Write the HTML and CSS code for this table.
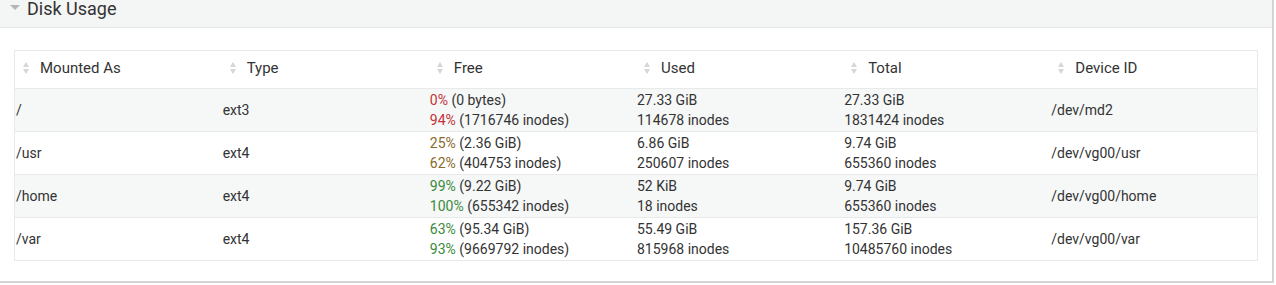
FILE: index.html
```html
<!DOCTYPE html>
<html lang="en">
<head>
    <meta charset="UTF-8">
    <title>Disk Usage</title>
    <link rel="stylesheet" href="styles.css">
</head>
<body>
    <div class="panel">
        <div class="panel-heading">
            <span class="caret"></span>Disk Usage
        </div>
        <div class="panel-body">
            <table class="disk-table">
                <thead>
                    <tr>
                        <th><span class="sort"></span>Mounted As</th>
                        <th><span class="sort"></span>Type</th>
                        <th><span class="sort"></span>Free</th>
                        <th><span class="sort"></span>Used</th>
                        <th><span class="sort"></span>Total</th>
                        <th><span class="sort"></span>Device ID</th>
                    </tr>
                </thead>
                <tbody>
                    <tr>
                        <td>/</td>
                        <td>ext3</td>
                        <td><span class="danger">0%</span> (0 bytes)<br><span class="danger">94%</span> (1716746 inodes)</td>
                        <td>27.33 GiB<br>114678 inodes</td>
                        <td>27.33 GiB<br>1831424 inodes</td>
                        <td>/dev/md2</td>
                    </tr>
                    <tr>
                        <td>/usr</td>
                        <td>ext4</td>
                        <td><span class="warning">25%</span> (2.36 GiB)<br><span class="warning">62%</span> (404753 inodes)</td>
                        <td>6.86 GiB<br>250607 inodes</td>
                        <td>9.74 GiB<br>655360 inodes</td>
                        <td>/dev/vg00/usr</td>
                    </tr>
                    <tr>
                        <td>/home</td>
                        <td>ext4</td>
                        <td><span class="success">99%</span> (9.22 GiB)<br><span class="success">100%</span> (655342 inodes)</td>
                        <td>52 KiB<br>18 inodes</td>
                        <td>9.74 GiB<br>655360 inodes</td>
                        <td>/dev/vg00/home</td>
                    </tr>
                    <tr>
                        <td>/var</td>
                        <td>ext4</td>
                        <td><span class="success">63%</span> (95.34 GiB)<br><span class="success">93%</span> (9669792 inodes)</td>
                        <td>55.49 GiB<br>815968 inodes</td>
                        <td>157.36 GiB<br>10485760 inodes</td>
                        <td>/dev/vg00/var</td>
                    </tr>
                </tbody>
            </table>
        </div>
    </div>
</body>
</html>
```

FILE: styles.css
```css
body { margin: 0; font-family: Roboto, 'Liberation Sans', sans-serif; font-size: 14px; color: #333; background: #fff; }
.panel {
    width: 1272px;
    border-right: 2px solid #d4d4d4;
    border-bottom: 2px solid #d4d4d4;
}
.panel-heading {
    height: 27px;
    line-height: 18px;
    font-size: 18px;
    padding-left: 27px;
    background: #f4f5f5;
    border-bottom: 1px solid #e6e8e8;
    position: relative;
}
.caret {
    position: absolute;
    left: 10px;
    top: 5px;
    width: 0;
    height: 0;
    border-left: 5px solid transparent;
    border-right: 5px solid transparent;
    border-top: 5px solid #b5b5b5;
}
.panel-body { padding: 22px 14px 20px 14px; }
.disk-table {
    width: 100%;
    table-layout: fixed;
    border-collapse: collapse;
    border: 1px solid #e8e9e9;
}
.disk-table th {
    height: 34px;
    padding: 0 0 3px 8px;
    text-align: left;
    font-weight: normal;
    font-size: 15px;
    border-bottom: 1px solid #e8e9e9;
}
.disk-table td {
    padding: 1px 1px;
    line-height: 20px;
    height: 40px;
    border-bottom: 1px solid #e8e9e9;
    vertical-align: middle;
}
.disk-table tbody tr:nth-child(odd) { background: #f6f7f7; }
.sort {
    display: inline-block;
    position: relative;
    width: 7px;
    height: 12px;
    margin-right: 10px;
    vertical-align: -1px;
}
.sort::before, .sort::after {
    content: '';
    position: absolute;
    left: 0;
    border-left: 3.5px solid transparent;
    border-right: 3.5px solid transparent;
}
.sort::before { top: 0; border-bottom: 5px solid #d6d6d6; }
.sort::after { bottom: 0; border-top: 5px solid #d6d6d6; }
.danger { color: #c23236; }
.warning { color: #8a6a2e; }
.success { color: #3a8a3b; }
```
